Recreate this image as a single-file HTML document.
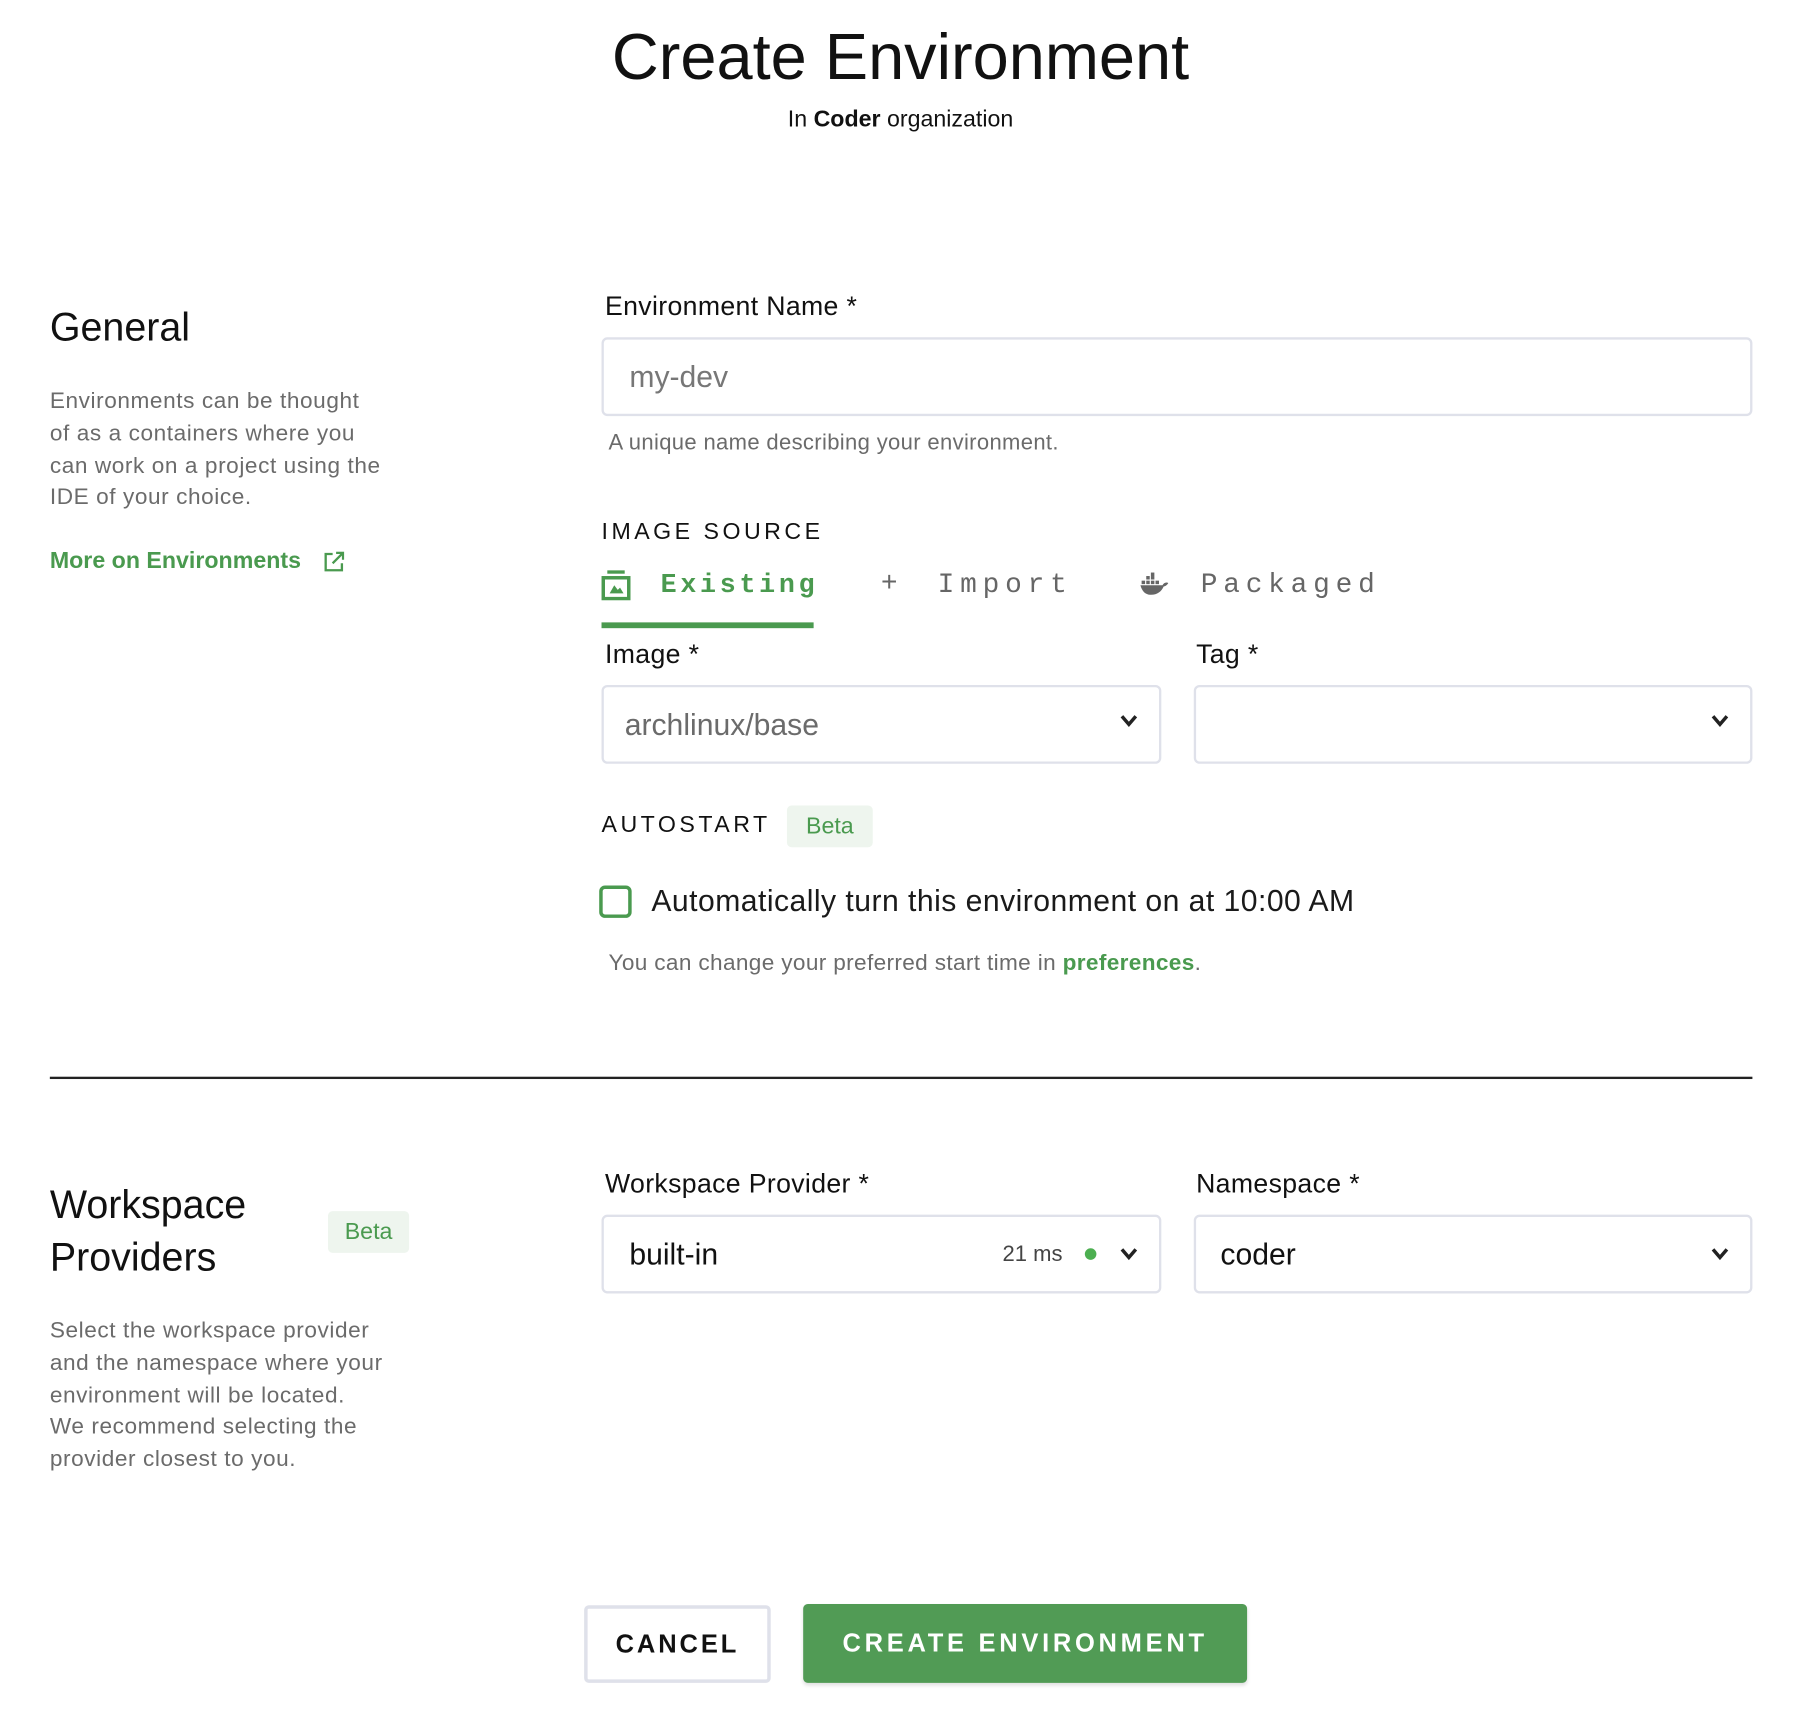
<!DOCTYPE html>
<html><head><meta charset="utf-8"><style>
html,body{margin:0;padding:0;background:#fff;width:1819px;height:1713px;overflow:hidden}
#w{position:absolute;left:0;top:0;width:1569px;height:1478px;transform:scale(1.159);transform-origin:0 0;font-family:"Liberation Sans",sans-serif;color:#111}
.a{position:absolute;white-space:nowrap}
.box{position:absolute;border:2px solid #dfe1ea;border-radius:5px;box-sizing:border-box;background:#fff}
.lbl{font-size:23px;color:#111;letter-spacing:0.3px}
.desc{font-size:19.5px;color:#6b6b6b;line-height:27.8px;letter-spacing:0.5px}
.mono{font-family:"Liberation Mono",monospace;font-size:24px;letter-spacing:5px;color:#666}
.beta{position:absolute;background:#eef5ee;color:#4a9a4f;font-size:20px;border-radius:4px;text-align:center}
.chev{position:absolute;width:16px;height:12px}
</style></head><body><div id="w">
<div class="a" style="left:0;width:1554px;text-align:center;top:16px;font-size:56px">Create Environment</div>
<div class="a" style="left:0;width:1554px;text-align:center;top:92px;font-size:20px">In <b>Coder</b> organization</div>

<div class="a" style="left:43px;top:264px;font-size:34px">General</div>
<div class="a desc" style="left:43px;top:333px">Environments can be thought<br>of as a containers where you<br>can work on a project using the<br>IDE of your choice.</div>
<div class="a" style="left:43px;top:473px;font-size:20px;color:#4a9a4f;font-weight:bold">More on Environments</div>
<svg class="a" style="left:279px;top:476px" width="18" height="18" viewBox="0 0 18 18" fill="none" stroke="#4a9a4f" stroke-width="2"><path d="M8 2H2v14h14v-6M11 1h6v6M17 1L8 10"/></svg>

<div class="a lbl" style="left:522px;top:251px">Environment Name *</div>
<div class="box" style="left:519px;top:291px;width:993px;height:68px"></div>
<div class="a" style="left:543px;top:310px;font-size:26px;color:#777">my-dev</div>
<div class="a" style="left:525px;top:372px;font-size:19px;color:#6b6b6b;letter-spacing:0.3px">A unique name describing your environment.</div>

<div class="a" style="left:519px;top:448px;font-size:20px;letter-spacing:3px;font-weight:500">IMAGE SOURCE</div>
<svg class="a" style="left:519px;top:492px" width="25" height="26" viewBox="0 0 25 26"><rect x="5" y="0" width="15" height="3" fill="#4a9a4f"/><rect x="1.5" y="6.5" width="22" height="18" fill="none" stroke="#4a9a4f" stroke-width="3"/><path d="M7 20l4-7 3 4 2-2 3 5z" fill="#4a9a4f"/></svg>
<div class="a mono" style="left:570px;top:492px;color:#4a9a4f;font-weight:bold;letter-spacing:3.2px;font-size:23px">Existing</div>
<div class="a" style="left:519px;top:537px;width:183px;height:5px;background:#4a9a4f"></div>
<div class="a mono" style="left:760px;top:491px">+</div>
<div class="a mono" style="left:809px;top:492px">Import</div>
<svg class="a" style="left:983px;top:494px" width="26" height="20" viewBox="0 0 26 20" fill="#666"><rect x="6" y="3" width="3" height="3"/><rect x="10" y="3" width="3" height="3"/><rect x="10" y="0" width="3" height="3"/><rect x="2" y="7" width="3" height="3"/><rect x="6" y="7" width="3" height="3"/><rect x="10" y="7" width="3" height="3"/><rect x="14" y="7" width="3" height="3"/><path d="M1 11h19c1-2 3-3 5-2-1 2-3 3-4 3-2 5-7 8-13 7-4-1-6-4-7-8z"/></svg>
<div class="a mono" style="left:1036px;top:492px">Packaged</div>

<div class="a lbl" style="left:522px;top:551px">Image *</div>
<div class="a lbl" style="left:1032px;top:551px">Tag *</div>
<div class="box" style="left:519px;top:591px;width:483px;height:68px"></div>
<div class="box" style="left:1030px;top:591px;width:482px;height:68px"></div>
<div class="a" style="left:539px;top:610px;font-size:26px;color:#6b6b6b">archlinux/base</div>
<svg class="chev" style="left:966px;top:616px" viewBox="0 0 16 12"><path d="M2 2l6 7 6-7" fill="none" stroke="#222" stroke-width="3"/></svg>
<svg class="chev" style="left:1476px;top:616px" viewBox="0 0 16 12"><path d="M2 2l6 7 6-7" fill="none" stroke="#222" stroke-width="3"/></svg>

<div class="a" style="left:519px;top:701px;font-size:20px;letter-spacing:3px;font-weight:500">AUTOSTART</div>
<div class="beta" style="left:679px;top:695px;width:74px;height:36px;line-height:36px">Beta</div>
<div class="a" style="left:517px;top:764px;width:28px;height:28px;border:3px solid #4a9a4f;border-radius:5px;box-sizing:border-box"></div>
<div class="a" style="left:562px;top:762px;font-size:26px;color:#1a1a1a;letter-spacing:0.4px">Automatically turn this environment on at 10:00 AM</div>
<div class="a" style="left:525px;top:820px;font-size:19.5px;color:#6b6b6b;letter-spacing:0.3px">You can change your preferred start time in <b style="color:#4a9a4f">preferences</b>.</div>

<div class="a" style="left:43px;top:929px;width:1469px;height:1.5px;background:#222"></div>

<div class="a" style="left:43px;top:1018px;font-size:34px;line-height:45px">Workspace<br>Providers</div>
<div class="beta" style="left:283px;top:1045px;width:70px;height:36px;line-height:36px">Beta</div>
<div class="a desc" style="left:43px;top:1135px">Select the workspace provider<br>and the namespace where your<br>environment will be located.<br>We recommend selecting the<br>provider closest to you.</div>

<div class="a lbl" style="left:522px;top:1008px">Workspace Provider *</div>
<div class="a lbl" style="left:1032px;top:1008px">Namespace *</div>
<div class="box" style="left:519px;top:1048px;width:483px;height:68px"></div>
<div class="box" style="left:1030px;top:1048px;width:482px;height:68px"></div>
<div class="a" style="left:543px;top:1067px;font-size:26px;color:#111">built-in</div>
<div class="a" style="left:865px;top:1072px;font-size:19px;color:#444">21 ms</div>
<div class="a" style="left:936px;top:1077px;width:10px;height:10px;border-radius:50%;background:#4caf50"></div>
<svg class="chev" style="left:966px;top:1076px" viewBox="0 0 16 12"><path d="M2 2l6 7 6-7" fill="none" stroke="#222" stroke-width="3"/></svg>
<div class="a" style="left:1053px;top:1067px;font-size:26px;color:#111">coder</div>
<svg class="chev" style="left:1476px;top:1076px" viewBox="0 0 16 12"><path d="M2 2l6 7 6-7" fill="none" stroke="#222" stroke-width="3"/></svg>

<div class="a" style="left:504px;top:1385px;width:161px;height:67px;border:3px solid #dfe1ea;border-radius:4px;box-sizing:border-box;text-align:center;line-height:61px;font-size:22px;font-weight:bold;letter-spacing:2.5px;color:#111">CANCEL</div>
<div class="a" style="left:693px;top:1384px;width:383px;height:68px;background:#519b55;border-radius:4px;text-align:center;line-height:68px;font-size:22px;font-weight:bold;letter-spacing:3.2px;color:#fff;box-shadow:0 2px 3px rgba(0,0,0,.12)">CREATE ENVIRONMENT</div>
</div></body></html>
